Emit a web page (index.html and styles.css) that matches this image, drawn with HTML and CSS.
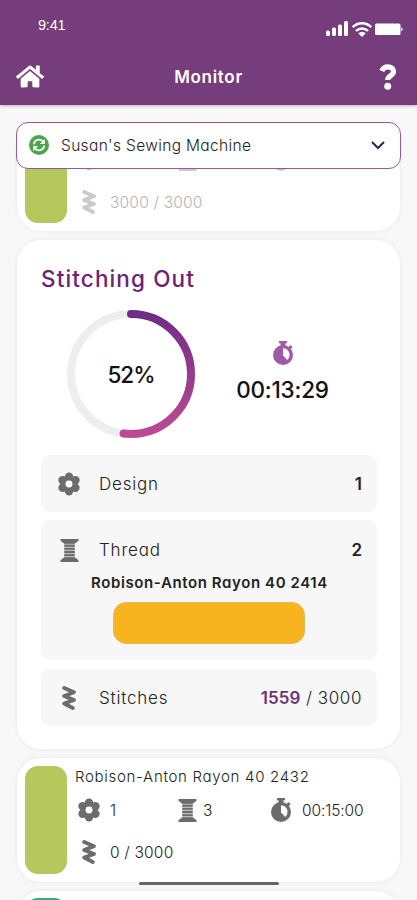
FILE: index.html
```html
<!DOCTYPE html>
<html lang="en">
<head>
<meta charset="utf-8">
<title>Monitor</title>
<link rel="stylesheet" href="styles.css">
</head>
<body>
<svg class="defs" aria-hidden="true">
  <symbol id="flower" viewBox="0 0 24 26">
    <g fill="currentColor"><circle cx="12" cy="5" r="4.6"/><circle cx="12" cy="21" r="4.6"/><circle cx="5" cy="9" r="4.6"/><circle cx="19" cy="9" r="4.6"/><circle cx="5" cy="17" r="4.6"/><circle cx="19" cy="17" r="4.6"/></g>
    <circle cx="12" cy="13" r="6.3" fill="none" stroke="currentColor" stroke-width="5"/>
    <circle class="hole" cx="12" cy="13" r="3.7"/>
  </symbol>
  <symbol id="spool" viewBox="0 0 20 24">
    <path fill="currentColor" d="M.5 0h19v1.8L15.5 5h-11L.5 1.800zM.5 24h19v-1.800L15.500 19h-11L.5 22.200z"/>
    <path stroke="currentColor" stroke-width="1.900" d="M4.500 7h11M4.500 10.300h11M4.500 13.600h11M4.500 16.900h11"/>
    <path fill="currentColor" opacity=".45" d="M4.500 4h11v16h-11z"/>
  </symbol>
  <symbol id="zigzag" viewBox="0 0 14 24">
    <path fill="none" stroke="currentColor" stroke-width="3.800" stroke-linecap="round" stroke-linejoin="round" d="M2.200 2L12 6.300 2.200 10 12 14 2.200 17.500 10.800 22"/>
  </symbol>
  <symbol id="timer" viewBox="0 0 20 24">
    <path fill="currentColor" d="M6 0h8v2.200h-1.500V5h-5V2.200H6zM15.300 6l2.400-2 2 2.200-2.200 2z"/>
    <circle cx="10" cy="14" r="10" fill="currentColor"/>
    <path class="hole" d="M10 7.300c3.700 0 6.500 2.900 6.500 6.600 0 2-.9 3.900-2.300 5.100L10 14.300z"/>
  </symbol>
</svg>
<div class="app">
  <header class="header">
    <div class="status">
      <span class="clock">9:41</span>
      <svg class="signals" viewBox="0 0 78 18" width="78" height="18" fill="#fff">
        <rect x="1" y="10.500" width="4" height="5.500" rx="1.500"/><rect x="7" y="7.500" width="4" height="8.500" rx="1.500"/><rect x="13" y="4.500" width="4" height="11.500" rx="1.500"/><rect x="19" y="1" width="4" height="15" rx="1.500"/>
        <g fill="none" stroke="#fff" stroke-width="2.500"><path d="M27.700 7.200a13 13 0 0 1 18.600 0"/><path d="M31 11a8.400 8.400 0 0 1 12 0"/></g>
        <path d="M33.300 13.200a5.300 5.300 0 0 1 7.400 0L37 17z"/>
        <rect x="50" y="3.500" width="25.500" height="11.500" rx="1.500"/><path d="M76.300 7q2.500 2.200 0 4.500z"/>
      </svg>
    </div>
    <div class="bar">
      <svg class="home" viewBox="0 0 576 512" fill="#fff"><path d="M280.370 148.260L96 300.110V464a16 16 0 0 0 16 16l112.060-.29a16 16 0 0 0 15.920-16V368a16 16 0 0 1 16-16h64a16 16 0 0 1 16 16v95.640a16 16 0 0 0 16 16.050L464 480a16 16 0 0 0 16-16V300L295.670 148.260a12.190 12.190 0 0 0-15.300 0zM571.600 251.470L488 182.560V44.050a12 12 0 0 0-12-12h-56a12 12 0 0 0-12 12v72.610L318.470 43a48 48 0 0 0-61 0L4.340 251.470a12 12 0 0 0-1.600 16.900l25.500 31A12 12 0 0 0 45.150 301l235.220-193.740a12.190 12.190 0 0 1 15.300 0L530.900 301a12 12 0 0 0 16.900-1.600l25.500-31a12 12 0 0 0-1.700-16.930z"/></svg>
      <h1 class="title">Monitor</h1>
      <svg class="help" viewBox="0 0 18 26"><path d="M2.800 7C4 4 6 2.900 8.800 2.900c3.400 0 5.700 1.800 5.700 4.500 0 4.300-5.800 4-5.800 8.600" fill="none" stroke="#fff" stroke-width="5.200"/><circle cx="8.700" cy="22.200" r="3.500" fill="#fff"/></svg>
    </div>
  </header>

  <div class="selector">
    <svg class="sync" viewBox="0 0 20 20"><circle cx="10" cy="10" r="10" fill="#4ba54c"/><g fill="none" stroke="#fff" stroke-width="1.900"><path d="M4.800 9.300A5.200 5.200 0 0 1 13.800 6.400"/><path d="M15.200 10.700a5.200 5.200 0 0 1-9 2.900"/></g><path fill="#fff" d="M15.800 4v5h-5zM4.200 16v-5h5z"/></svg>
    <span class="machine">Susan's Sewing Machine</span>
    <svg class="chevron" viewBox="0 0 14 9"><path d="M1 1l6 6 6-6" fill="none" stroke="#2c2458" stroke-width="2"/></svg>
  </div>

  <main class="list">
    <section class="card job done">
      <div class="swatch"></div>
      <div class="info">
        <div class="name"></div>
        <div class="stats"><span class="stat"><svg class="i-flower"><use href="#flower"/></svg></span><span class="stat"><svg class="i-spool"><use href="#spool"/></svg></span><span class="stat"><svg class="i-timer"><use href="#timer"/></svg></span></div>
        <div class="count"><svg class="i-zig"><use href="#zigzag"/></svg>3000 / 3000</div>
      </div>
    </section>

    <section class="card active">
      <h2 class="heading">Stitching Out</h2>
      <div class="progress">
        <div class="ring">
          <svg viewBox="0 0 128 128" width="128" height="128">
            <defs><linearGradient id="arc" gradientUnits="userSpaceOnUse" x1="128" y1="64" x2="0" y2="64"><stop offset="0" stop-color="#6d2c85"/><stop offset="1" stop-color="#be4b94"/></linearGradient></defs>
            <circle cx="64" cy="64" r="60" fill="none" stroke="#eee" stroke-width="8"/>
            <circle cx="64" cy="64" r="60" fill="none" stroke="url(#arc)" stroke-width="8" stroke-linecap="round" pathLength="100" stroke-dasharray="52 100" transform="rotate(-90 64 64)"/>
          </svg>
          <span class="percent">52%</span>
        </div>
        <div class="remaining">
          <svg class="i-timer accent"><use href="#timer"/></svg>
          <span class="time">00:13:29</span>
        </div>
      </div>
      <div class="panel">
        <div class="row"><svg class="i-flower"><use href="#flower"/></svg><span class="label">Design</span><b class="value">1</b></div>
      </div>
      <div class="panel thread">
        <div class="row"><svg class="i-spool"><use href="#spool"/></svg><span class="label">Thread</span><b class="value">2</b></div>
        <div class="thread-name">Robison-Anton Rayon 40 2414</div>
        <div class="thread-color"></div>
      </div>
      <div class="panel">
        <div class="row"><svg class="i-zig"><use href="#zigzag"/></svg><span class="label">Stitches</span><span class="total"><b>1559</b><span> / 3000</span></span></div>
      </div>
    </section>

    <section class="card job">
      <div class="swatch"></div>
      <div class="info">
        <div class="name">Robison-Anton Rayon 40 2432</div>
        <div class="stats"><span class="stat"><svg class="i-flower"><use href="#flower"/></svg>1</span><span class="stat"><svg class="i-spool"><use href="#spool"/></svg>3</span><span class="stat"><svg class="i-timer"><use href="#timer"/></svg>00:15:00</span></div>
        <div class="count"><svg class="i-zig"><use href="#zigzag"/></svg>0 / 3000</div>
      </div>
    </section>

    <section class="card job">
      <div class="swatch teal"></div>
    </section>
  </main>
  <div class="indicator"></div>
</div>
</body>
</html>
```
FILE: styles.css
```css
* { box-sizing: border-box; }
body { margin: 0; background: #f8f8f8; font-family: Inter, "Open Sans", sans-serif; font-feature-settings: "cv11"; color: #222; }
h1, h2 { margin: 0; }
svg { display: block; flex: none; }
.defs { position: absolute; width: 0; height: 0; }
.app { width: 417px; height: 900px; overflow: hidden; position: relative; }
.header { height: 105px; background: #763d7c; box-shadow: 0 1px 3px rgba(70, 40, 80, .35); color: #fff; }
.status { display: flex; justify-content: space-between; align-items: center; height: 48px; padding: 10px 14px 0 38px; }
.clock { margin-top: -9px; font: 14.500px "Liberation Sans", sans-serif; letter-spacing: -.2px; }
.bar { display: flex; justify-content: space-between; align-items: center; height: 57px; padding: 0 20px 0 16px; }
.home { width: 28px; height: 25px; }
.title { margin-right: 6px; font-size: 17px; font-weight: 600; letter-spacing: .7px; }
.help { width: 18px; height: 26px; }
.selector { position: relative; z-index: 2; display: flex; align-items: center; height: 47px; margin: 17px 16px 0; padding: 0 15px 0 12px; background: #fff; border: 1.500px solid #925c96; border-radius: 12px; }
.sync { width: 20px; height: 20px; margin-top: -2px; }
.machine { flex: 1; margin: 0 0 0 12px; font-size: 15.500px; font-weight: 300; letter-spacing: .35px; }
.chevron { width: 14px; height: 9px; }
.list { height: 755px; margin-top: -24px; padding: 0 17px; overflow: hidden; }
.card { background: #fff; border-radius: 24px; box-shadow: 0 0 5px rgba(0, 0, 0, .07); margin-bottom: 9px; }
.job { display: flex; height: 124px; padding: 8px; }
.swatch { width: 42px; height: 108px; border-radius: 13px; background: #b6c75d; flex: none; }
.swatch.teal { margin-top: -1px; background: #3aa981; }
.info { flex: 1; margin-left: 8px; font-size: 15.500px; font-weight: 300; letter-spacing: .2px; }
.name { height: 21px; line-height: 21px; font-size: 15px; letter-spacing: .7px; white-space: nowrap; }
.stats { display: grid; grid-template-columns: 99px 94px 1fr; height: 46px; align-items: center; }
.stats .stat { letter-spacing: -.1px; }
.stat, .count { display: flex; align-items: center; }
.count { height: 38px; }
.i-flower { width: 22px; height: 24px; color: #6c6c6c; }
.i-spool { width: 19px; height: 23px; color: #6c6c6c; }
.i-zig { width: 14px; height: 24px; color: #6c6c6c; }
.i-timer { width: 20px; height: 24px; color: #6c6c6c; }
.hole { fill: #fff; }
.info .i-flower { margin: 0 10px 0 3px; }
.info .i-spool { margin: 0 6px 0 4px; }
.info .i-timer { margin: 0 11px 0 3px; }
.info .i-zig { margin: 0 14px 0 7px; }
.done { margin-top: -38px; }
.done .info { opacity: .35; }
.done .count { height: 40px; }
.active { height: 509px; padding: 24px 23px 0 24px; }
.heading { height: 30px; line-height: 30px; font-size: 22.500px; font-weight: 500; letter-spacing: 1.120px; color: #6b2377; }
.progress { display: flex; margin: 16px 0 17px 26px; }
.ring { display: grid; place-items: center; width: 128px; height: 128px; }
.ring > * { grid-area: 1 / 1; }
.percent { font-size: 22.500px; font-weight: 500; letter-spacing: -1.040px; color: #111; }
.remaining { display: flex; flex-direction: column; align-items: center; width: 175px; padding-top: 31px; }
.accent { color: #a05aa5; }
.time { margin-top: 10px; font-size: 22.500px; line-height: 30px; font-weight: 500; letter-spacing: -.2px; color: #111; }
.panel { height: 57px; margin-bottom: 8px; padding: 0 15px 0 16px; background: #f7f7f7; border-radius: 9px; }
.panel .hole { fill: #f7f7f7; }
.row { display: grid; grid-template-columns: 24px 1fr auto; column-gap: 18px; align-items: center; justify-items: start; height: 57px; font-size: 17px; font-weight: 300; }
.row svg { justify-self: center; }
.label { letter-spacing: .8px; }
.value { font-weight: 600; }
.thread { height: 140px; margin-bottom: 9px; }
.thread .row { height: 51px; padding-top: 9px; }
.thread-name { height: 23px; line-height: 23px; text-align: center; font-size: 15px; font-weight: 600; letter-spacing: .6px; white-space: nowrap; }
.thread-color { width: 192px; height: 42px; margin: 8px 0 0 56px; background: #f8b41e; border: 1px solid #e6b75c; border-radius: 13px; }
.total b { font-weight: 600; letter-spacing: .1px; color: #6b3278; }
.total span { white-space: pre; letter-spacing: .6px; }
.indicator { position: absolute; left: 139px; top: 882px; width: 140px; height: 3px; border-radius: 2px; background: #666; }
```
